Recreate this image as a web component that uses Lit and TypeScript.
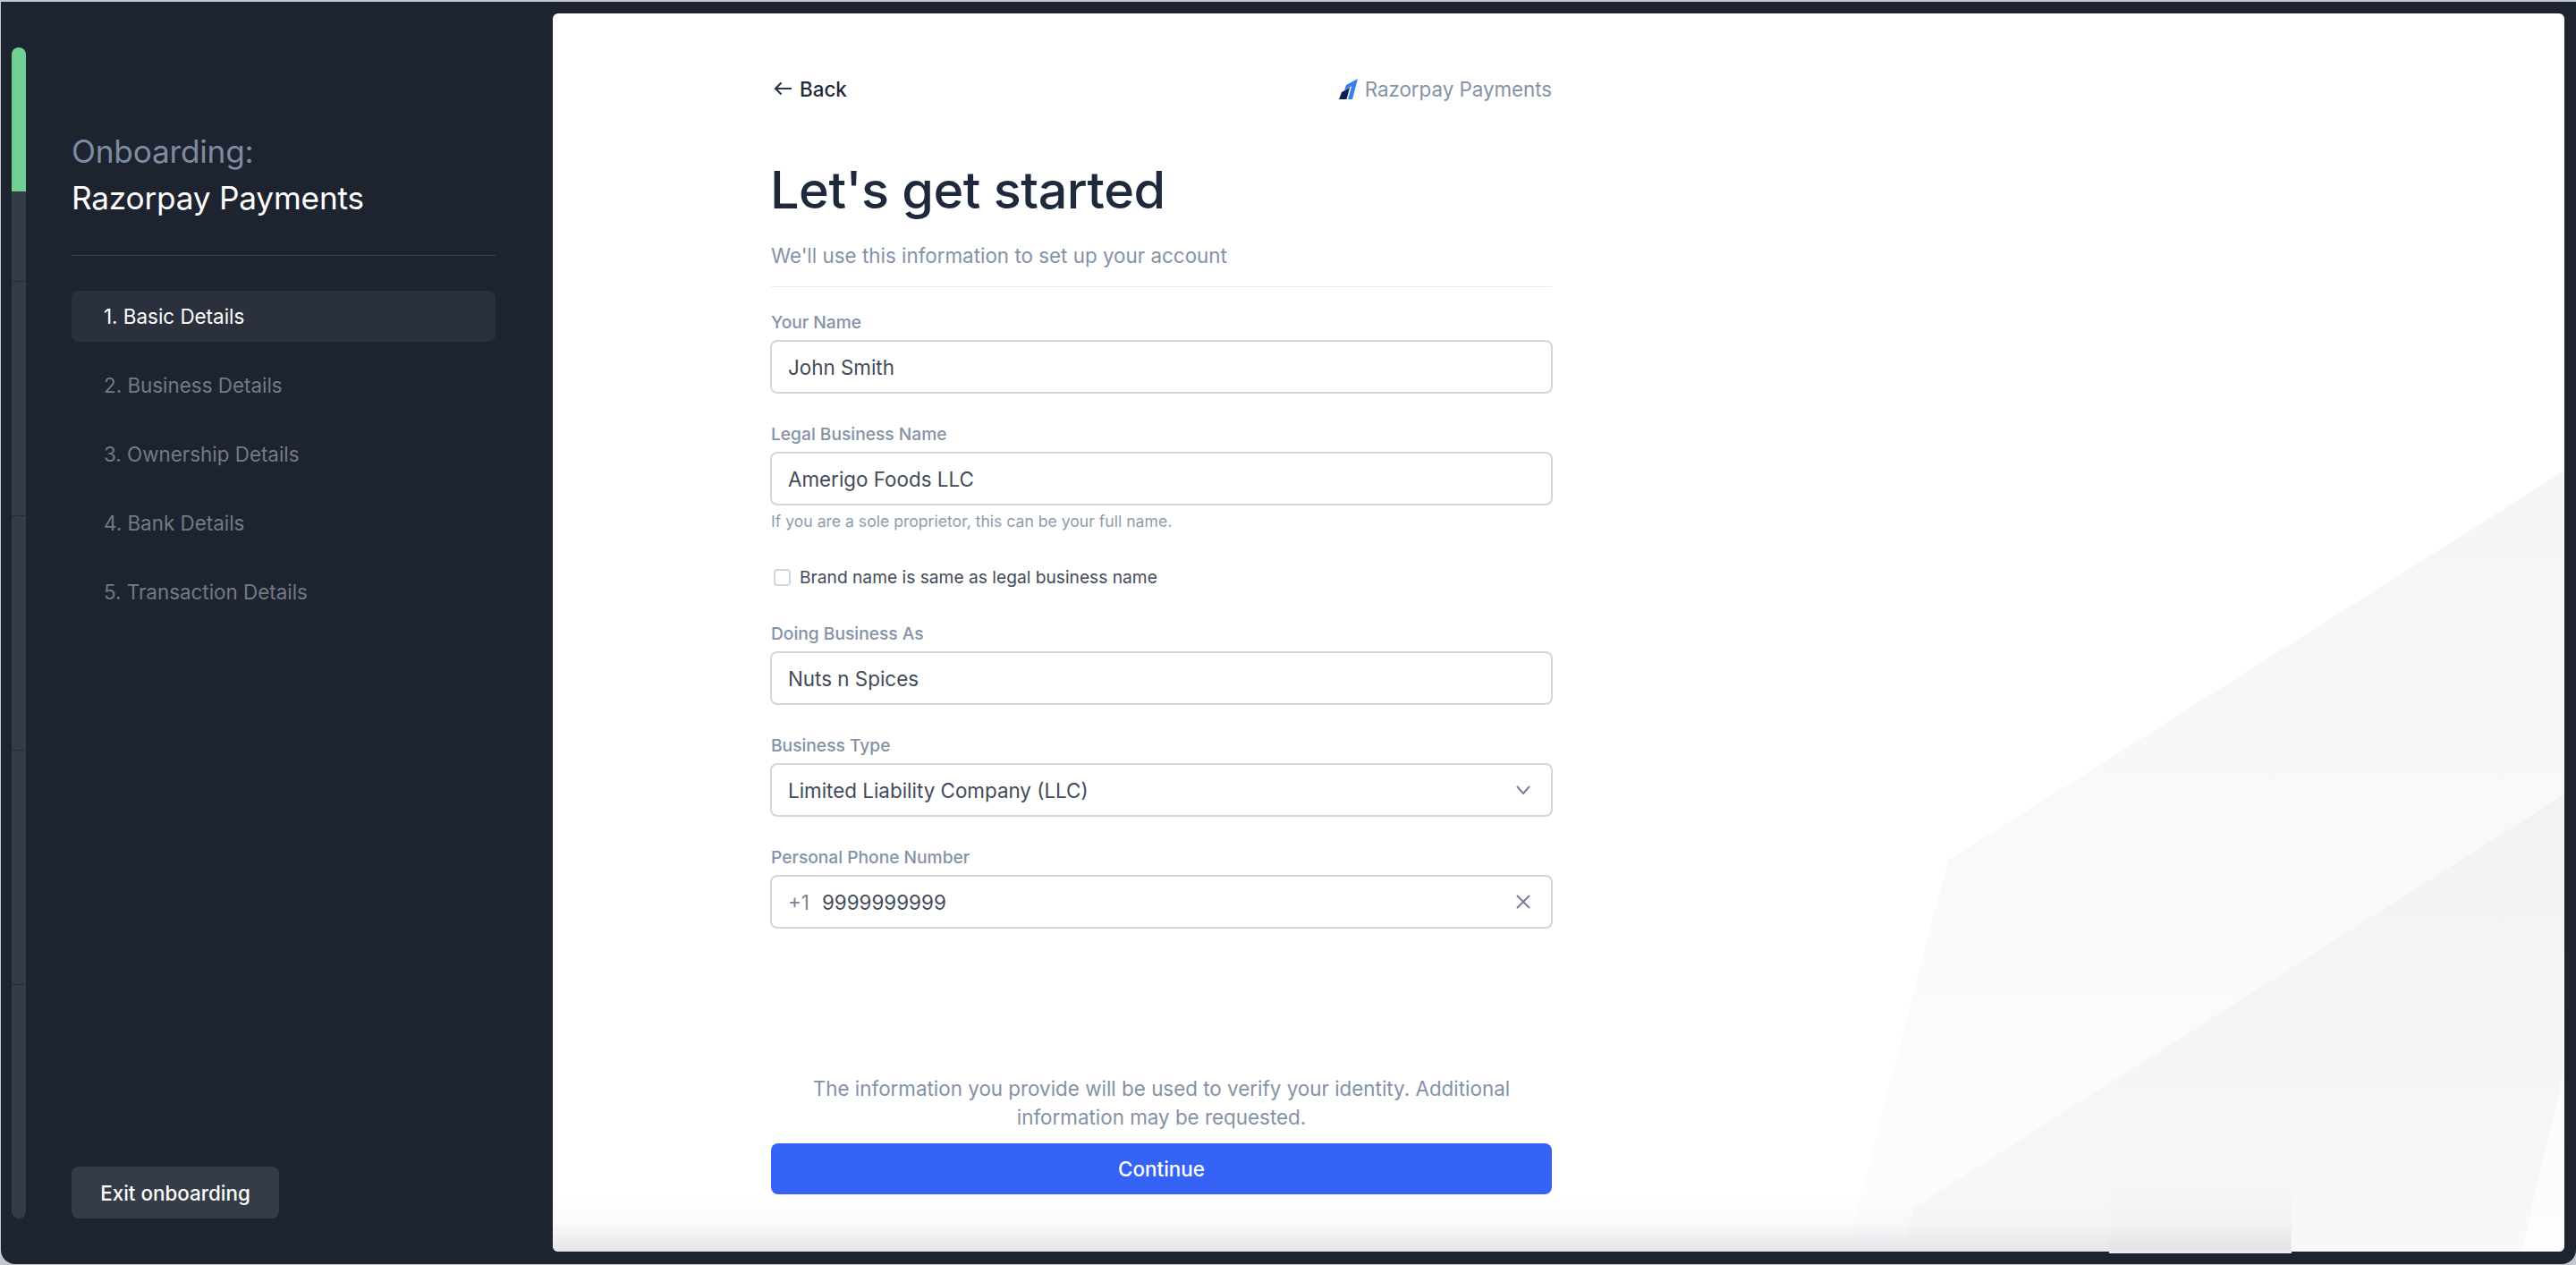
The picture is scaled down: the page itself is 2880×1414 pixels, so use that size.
import { LitElement, html, css } from "lit";
import { customElement } from "lit/decorators.js";

@customElement("app-root")
export class AppRoot extends LitElement {
  static styles = css`
    :host { display: block; width: 2880px; height: 1414px; overflow: hidden; background: #c4c7cc; font-family: Inter, "Liberation Sans", sans-serif; box-sizing: border-box; padding: 2px 0 0 1px; }
    *, *::before, *::after { box-sizing: border-box; }
    .frame { display: flex; height: 1411px; background: #1d2430; border-radius: 0 0 16px 16px; padding: 13px 13px 14px 0; }
    .side { width: 617px; flex: none; display: flex; padding: 38px 0 37px 12px; }
    .track { width: 16px; flex: none; display: flex; flex-direction: column; gap: 1px; border-radius: 8px; overflow: hidden; margin-right: 51px; background: #262d38; }
    .seg { flex: 1; background: #353c47; }
    .seg.done { background: linear-gradient(#6fd096 0 61.5%, #353c47 61.5%); }
    .nav { width: 474px; display: flex; flex-direction: column; }
    .title { font-size: 35.2px; line-height: 52px; letter-spacing: -0.2px; margin: 90px 0 0; padding-bottom: 38px; border-bottom: 1px solid #3a414c; font-weight: 400; }
    .title span { display: block; white-space: nowrap; }
    .t1 { color: #7f8ba1; }
    .t2 { color: #ffffff; }
    .steps { list-style: none; margin: 39px 0 0; padding: 0; display: flex; flex-direction: column; gap: 20px; }
    .steps li { height: 57px; display: flex; align-items: center; padding-left: 36px; font-size: 22.4px; color: #747a85; border-radius: 8px; }
    .steps li.on { background: #2a313c; color: #fff; }
    .exit { margin-top: auto; align-self: flex-start; width: 232px; height: 58px; background: #353c47; color: #fff; border: 0; border-radius: 8px; font: 500 22.4px Inter, sans-serif; }
    .panel { flex: 1; position: relative; background: #fff; border-radius: 6px; display: flex; padding: 0 0 0 243px; }
    .bg { position: absolute; inset: 0; width: 100%; height: 100%; border-radius: 6px; }
    .patch { position: absolute; left: 1740px; bottom: -2px; width: 204px; height: 102px; background: linear-gradient(rgba(0,0,0,0.004), rgba(0,0,0,0.012) 97%, #ececed 97%); }
    .form { position: relative; width: 875px; height: 100%; display: flex; flex-direction: column; }
    .top { display: flex; justify-content: space-between; align-items: center; height: 34px; margin-top: 67px; padding: 0 1px; }
    .back { display: flex; align-items: center; gap: 9px; font-size: 22.4px; font-weight: 500; color: #1f2937; padding-left: 3px; }
    .brand { display: flex; align-items: center; gap: 8px; font-size: 22.4px; letter-spacing: -0.05px; color: #8492a6; }
    h1 { margin: 58px 0 0 0; font-size: 57.6px; line-height: 76px; font-weight: 500; color: #1e293b; letter-spacing: -0.5px; }
    .sub { margin: 20px 1px 0; padding-bottom: 18px; border-bottom: 1px solid #e9ebee; font-size: 22.4px; line-height: 32px; color: #8492a6; }
    .field { display: flex; flex-direction: column; }
    .lab { font-size: 19.2px; font-weight: 500; line-height: 28px; color: #8492a6; padding-left: 1px; margin-bottom: 6px; }
    .inp { height: 60px; border: 2px solid #d3d6dd; border-radius: 8px; background: #fff; display: flex; align-items: center; padding: 0 22px 0 18px; font-size: 22.4px; color: #424b59; }
    .inp .grow { flex: 1; }
    .pre { color: #7b8594; margin-right: 14px; }
    .help { font-size: 17.6px; line-height: 24px; color: #8f9bad; margin: 6px 0 0 1px; }
    .chk { display: flex; align-items: center; gap: 10px; margin: 38px 0 0 4px; font-size: 19.2px; line-height: 24px; color: #424b59; }
    .box { width: 19px; height: 19px; border: 2px solid #d3d6dd; border-radius: 4px; background: #fff; }
    .note { margin: auto 1px 0; text-align: center; font-size: 22.4px; line-height: 32px; color: #8492a6; }
    .cta { margin: 13px 1px 64px; height: 57px; background: #3563f5; color: #fff; border: 0; border-radius: 8px; font: 500 22.4px Inter, sans-serif; }
  `;

  render() {
    const steps = ["1. Basic Details", "2. Business Details", "3. Ownership Details", "4. Bank Details", "5. Transaction Details"];
    const field = (label: string, body: unknown, mt: number) => html`
      <div class="field" style="margin-top:${mt}px"><div class="lab">${label}</div>${body}</div>`;
    return html`
      <div class="frame">
        <aside class="side">
          <div class="track">
            <div class="seg done"></div><div class="seg"></div><div class="seg"></div><div class="seg"></div><div class="seg"></div>
          </div>
          <div class="nav">
            <h2 class="title"><span class="t1">Onboarding:</span><span class="t2">Razorpay Payments</span></h2>
            <ul class="steps">${steps.map((s, i) => html`<li class=${i === 0 ? "on" : ""}>${s}</li>`)}</ul>
            <button class="exit">Exit onboarding</button>
          </div>
        </aside>
        <main class="panel">
          <svg class="bg" viewBox="0 0 2249 1384" preserveAspectRatio="none">
            <defs>
              <linearGradient id="g1" x1="0" y1="0" x2="0" y2="1"><stop offset="0" stop-color="#f5f5f5"/><stop offset="1" stop-color="#fdfdfd"/></linearGradient>
              <linearGradient id="g2" x1="0" y1="0" x2="0" y2="1"><stop offset="0" stop-color="#f2f2f2"/><stop offset="1" stop-color="#f8f8f8"/></linearGradient>
              <linearGradient id="fade" x1="0" y1="0" x2="0" y2="1"><stop offset="0" stop-color="#e4e6e9" stop-opacity="0"/><stop offset="0.5" stop-color="#e4e6e9" stop-opacity="0.2"/><stop offset="1" stop-color="#e4e6e9" stop-opacity="1"/></linearGradient>
            </defs>
            <polygon points="2249,511 1560,947 1446,1384 2249,1384" fill="url(#g1)"/>
            <polygon points="2249,873 1521,1335 1507,1384 2201,1384 2249,1180" fill="url(#g2)"/>
            <rect x="0" y="1320" width="1944" height="64" fill="url(#fade)"/>
          </svg>
          <div class="patch"></div>
          <div class="form">
            <div class="top">
              <div class="back">
                <svg width="20" height="16" viewBox="0 0 20 16" fill="none" stroke="#2d3748" stroke-width="2.2"><path d="M20 8H2M8.5 1.5 2 8l6.5 6.5"/></svg>
                Back
              </div>
              <div class="brand">
                <svg width="21" height="23" viewBox="0 0 21 23">
                  <polygon points="21,0 8,7 6,13 14,8.5 10,23 15,23" fill="#3b82e6"/>
                  <polygon points="0,23 3,15 12,10 8.5,23" fill="#0b2151"/>
                </svg>
                Razorpay Payments
              </div>
            </div>
            <h1>Let's get started</h1>
            <div class="sub">We'll use this information to set up your account</div>
            ${field("Your Name", html`<div class="inp">John Smith</div>`, 25)}
            ${field("Legal Business Name", html`<div class="inp">Amerigo Foods LLC</div>`, 31)}
            <div class="help">If you are a sole proprietor, this can be your full name.</div>
            <label class="chk"><span class="box"></span>Brand name is same as legal business name</label>
            ${field("Doing Business As", html`<div class="inp">Nuts n Spices</div>`, 37)}
            ${field("Business Type", html`<div class="inp"><span class="grow">Limited Liability Company (LLC)</span>
              <svg width="18" height="18" viewBox="0 0 18 18" fill="none" stroke="#758195" stroke-width="2"><path d="M2 5l7 8 7-8"/></svg></div>`, 31)}
            ${field("Personal Phone Number", html`<div class="inp"><span class="pre">+1</span><span class="grow">9999999999</span>
              <svg width="18" height="18" viewBox="0 0 18 18" fill="none" stroke="#758195" stroke-width="2"><path d="M2 2l14 14M16 2 2 16"/></svg></div>`, 31)}
            <p class="note">The information you provide will be used to verify your identity. Additional<br>information may be requested.</p>
            <button class="cta">Continue</button>
          </div>
        </main>
      </div>`;
  }
}
